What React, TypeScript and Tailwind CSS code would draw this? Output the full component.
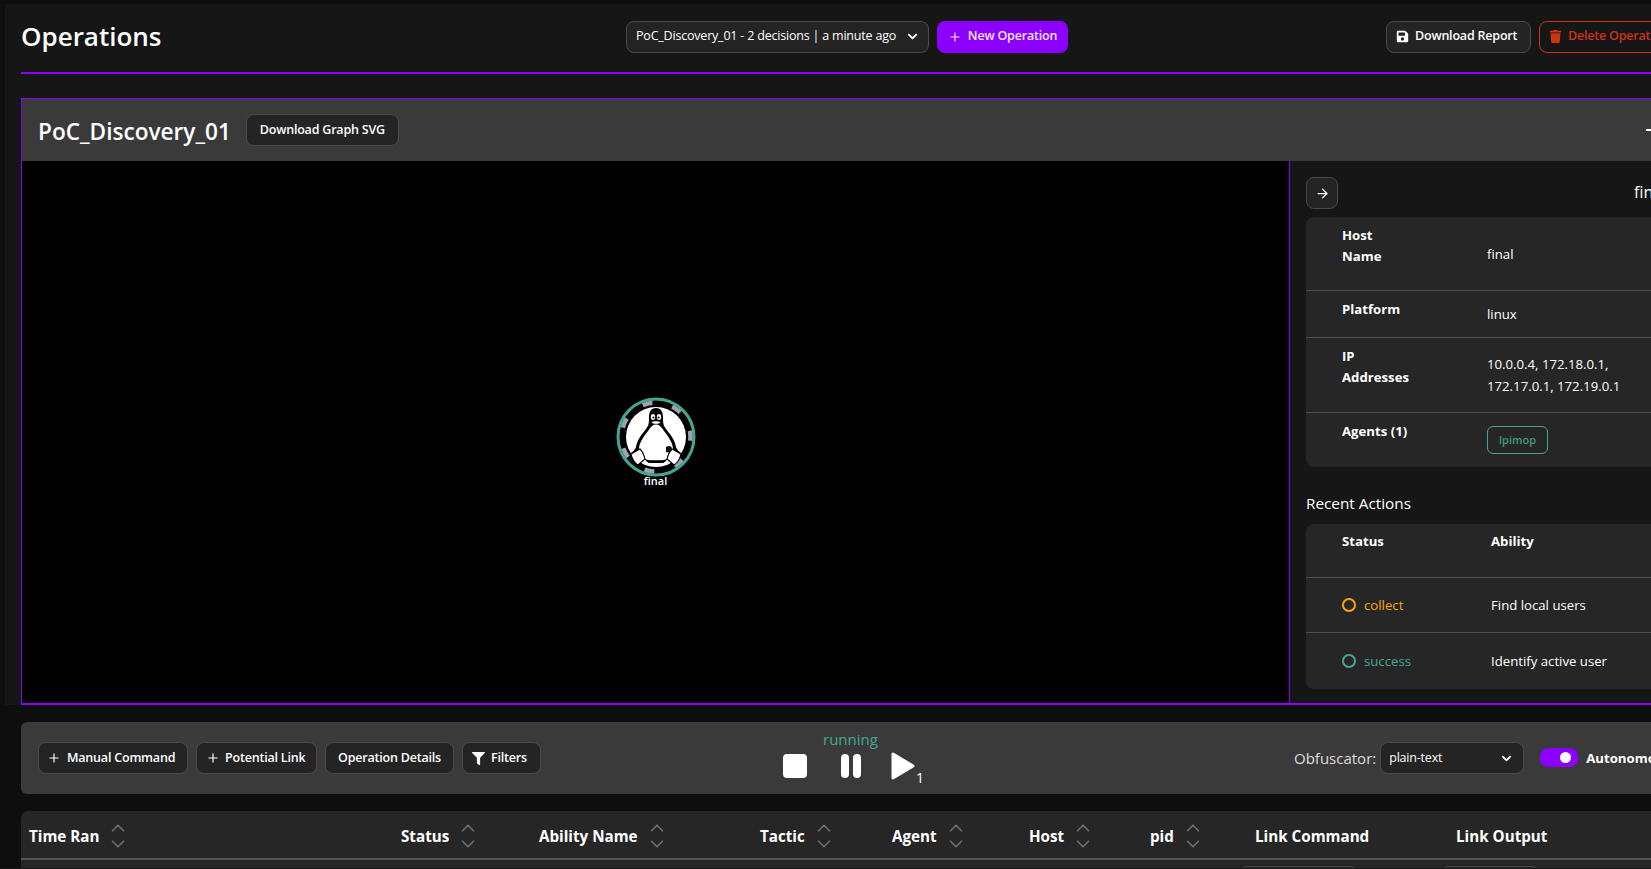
import { ArrowRight, ChevronDown, ChevronUp, Plus } from "lucide-react";
import { FaChevronDown, FaFilter, FaSave, FaTrash } from "react-icons/fa";

const rootFont = { fontFamily: '"Open Sans", "Noto Sans", sans-serif' };

const btn =
  "flex h-[32px] items-center rounded-lg border border-[#4a4a4a] bg-[#242424] text-[12.5px] tracking-[-0.2px] text-white font-semibold whitespace-nowrap";

const SortArrows = () => (
  <span className="ml-[8px] flex flex-col items-center text-[#6f6f6f]">
    <ChevronUp size={22} strokeWidth={1.8} className="-mb-[6px]" />
    <ChevronDown size={22} strokeWidth={1.8} />
  </span>
);

const PenguinNode = () => (
  <svg width="80" height="80" viewBox="0 0 80 80">
    <circle cx="40" cy="40" r="38" fill="#000" />
    <circle cx="40" cy="40" r="34.5" fill="none" stroke="#a0a0b0" strokeWidth="4.5" strokeDasharray="10 21" transform="rotate(-62 40 40)" />
    <circle cx="40" cy="40" r="38" fill="none" stroke="#44a692" strokeWidth="3" />
    <circle cx="40" cy="40" r="30" fill="#fff" />
    <path
      d="M40 11c-5 0-7 4-7 9 0 5 0 8-3 12-4 5-9 11-10 18-1 3-3 4-5 6l8 5 3-5c1 4 3 8 7 10h14c4-2 6-6 7-10l3 5 8-5c-2-2-4-3-5-6-1-7-6-13-10-18-3-4-3-7-3-12 0-5-2-9-7-9z"
      fill="#000"
    />
    <path d="M40 27c-4 1-6 4-8 7-4 5-9 12-9 18 0 6 4 12 17 12s17-6 17-12c0-6-5-13-9-18-2-3-4-6-8-7z" fill="#fff" />
    <ellipse cx="37" cy="20" rx="2.2" ry="3" fill="#fff" />
    <ellipse cx="43" cy="20" rx="2.2" ry="3" fill="#fff" />
    <circle cx="37.4" cy="20.5" r="1" fill="#000" />
    <circle cx="42.6" cy="20.5" r="1" fill="#000" />
    <path d="M35 25c2-1.5 8-1.5 10 0-2 3-8 3-10 0z" fill="#fff" stroke="#000" strokeWidth="0.6" />
    <path d="M15 57l9-5c2 2 4 6 5 10l-7 6c-3-2-6-6-7-11zM65 57l-9-5c-2 2-4 6-5 10l7 6c3-2 6-6 7-11z" fill="#fff" stroke="#000" strokeWidth="1.1" />
    <path d="M50 50c3-2 6-1 6 2s-3 4-6 3z" fill="#111" />
    <path d="M31 64h18" stroke="#000" strokeWidth="1.5" />
  </svg>
);

const HostRow = ({
  label,
  children,
  last,
  className,
}: {
  label: string[];
  children: React.ReactNode;
  last?: boolean;
  className: string;
}) => (
  <div className={`flex ${last ? "" : "border-b border-[#4d4d4d]"} ${className}`}>
    <div className="w-[181px] pl-[36px] font-bold text-white leading-[21px]">
      {label.map((l) => (
        <div key={l}>{l}</div>
      ))}
    </div>
    <div className="flex-1 text-white">{children}</div>
  </div>
);

const StatusRow = ({ color, status, ability, last }: { color: string; status: string; ability: string; last?: boolean }) => (
  <div className={`flex items-center pt-[1px] ${last ? "h-[56px]" : "h-[55px] border-b border-[#4d4d4d]"}`}>
    <div className="flex w-[185px] items-center gap-[8px] pl-[36px]">
      <span className={`h-[14px] w-[14px] rounded-full border-2 ${color === "orange" ? "border-[#ffa500]" : "border-[#44a692]"}`} />
      <span className={color === "orange" ? "text-[#ffa500]" : "text-[#44a692]"}>{status}</span>
    </div>
    <div className="text-white">{ability}</div>
  </div>
);

const Column = ({ title, width, sort = true }: { title: string; width: string; sort?: boolean }) => (
  <div className={`flex items-center ${width}`}>
    <span className="font-bold text-white text-[15.2px]">{title}</span>
    {sort && <SortArrows />}
  </div>
);

export default function App() {
  return (
    <div style={rootFont} className="h-[869px] w-[1651px] overflow-hidden bg-[#14161c] text-[13.2px]">
      <div className="flex h-[868px] overflow-hidden bg-[#0e0e0e]">
        <div className="w-[5px] shrink-0" />
        <div className="flex w-[1950px] shrink-0 flex-col">
          <div className="h-[4px] shrink-0" />
          <div className="bg-[#161616] pl-4">
            <div className="flex h-[70px] items-center border-b-2 border-[#8b00ff] pb-[3px]">
              <h1 className="w-[605px] text-[26px] font-semibold text-white">Operations</h1>
              <button className="mr-2 flex h-[32px] w-[303px] items-center justify-between whitespace-nowrap rounded-lg border border-[#4a4a4a] bg-[#242424] pl-[9px] pr-[10px] text-[12.5px] tracking-[-0.2px] text-white">
                PoC_Discovery_01 - 2 decisions | a minute ago
                <FaChevronDown size={11} />
              </button>
              <button className="flex h-[32px] w-[131px] items-center justify-center rounded-lg bg-[#8b00ff] text-[12.5px] tracking-[-0.2px] font-semibold text-white/90">
                <Plus size={14} className="mr-[6px]" />
                New Operation
              </button>
              <button className={`${btn} ml-[318px] w-[145px] pl-[9px]`}>
                <FaSave size={13} className="mr-[6px]" />
                Download Report
              </button>
              <button className="ml-2 flex h-[32px] items-center rounded-lg border border-[#cc3311] px-[9px] text-[12.5px] tracking-[-0.2px] font-semibold whitespace-nowrap text-[#cc3311]">
                <FaTrash size={13} className="mr-[6px]" />
                Delete Operation
              </button>
            </div>
            <div className="mt-[24px] flex h-[607px] flex-col border border-b-2 border-[#8b00ff] border-r-0 bg-[#161616]">
              <div className="flex h-[62px] shrink-0 items-center bg-[#3a3a3a] pl-4">
                <h2 className="mr-[15px] mt-[3px] text-[22.6px] font-semibold text-white">PoC_Discovery_01</h2>
                <button className={`${btn} w-[153px] justify-center`}>Download Graph SVG</button>
                <span className="ml-[1247px] h-[1.5px] w-[14px] bg-white" />
              </div>
              <div className="flex min-h-0 flex-1">
                <div className="flex w-[1268px] shrink-0 flex-col items-center border-r border-[#8b00ff] bg-black pt-[236px]">
                  <PenguinNode />
                  <span className="-mt-[4px] text-[11px] font-semibold text-white">final</span>
                </div>
                <div className="flex-1 px-4 pt-4">
                  <div className="relative h-[32px]">
                    <button className="flex h-[32px] w-[32px] items-center justify-center rounded-lg border border-[#4a4a4a] bg-[#242424] text-white">
                      <ArrowRight size={15} />
                    </button>
                    <span className="absolute left-[328px] top-[3px] text-[16px] text-white">final</span>
                  </div>
                  <div className="mt-[8px] w-[560px] rounded-lg bg-[#262626]">
                    <HostRow label={["Host", "Name"]} className="h-[74px] pt-[8px]">
                      <div className="pt-[20px]">final</div>
                    </HostRow>
                    <HostRow label={["Platform"]} className="h-[47px] pt-[8px]">
                      <div className="pt-[6px]">linux</div>
                    </HostRow>
                    <HostRow label={["IP", "Addresses"]} className="h-[75px] pt-[8px]">
                      <div className="pt-[7px] leading-[22px]">
                        10.0.0.4, 172.18.0.1,
                        <br />
                        172.17.0.1, 172.19.0.1
                      </div>
                    </HostRow>
                    <HostRow label={["Agents (1)"]} last className="h-[54px] pt-[8px]">
                      <span className="mt-[5px] inline-flex h-[28px] items-center rounded-md border border-[#44a692] px-[11px] text-[11px] font-semibold text-[#3d9a80]">
                        lpimop
                      </span>
                    </HostRow>
                  </div>
                  <div className="mt-[25px] text-[15.3px] text-white">Recent Actions</div>
                  <div className="mt-[9px] w-[560px] rounded-lg bg-[#262626]">
                    <div className="flex h-[54px] border-b border-[#4d4d4d] pt-[8px] font-bold text-white">
                      <div className="w-[185px] pl-[36px]">Status</div>
                      <div>Ability</div>
                    </div>
                    <StatusRow color="orange" status="collect" ability="Find local users" />
                    <StatusRow color="teal" status="success" ability="Identify active user" last />
                  </div>
                </div>
              </div>
            </div>
          </div>
          <div className="pl-4">
            <div className="mt-[17px] flex h-[72px] items-center rounded-md bg-[#3a3a3a] pl-[17px]">
              <div className="flex w-[745px] shrink-0 gap-2">
                <button className={`${btn} w-[150px] pl-[8px]`}>
                  <Plus size={14} className="mr-[6px]" />
                  Manual Command
                </button>
                <button className={`${btn} w-[121px] pl-[9px]`}>
                  <Plus size={14} className="mr-[5px]" />
                  Potential Link
                </button>
                <button className={`${btn} w-[129px] justify-center`}>Operation Details</button>
                <button className={`${btn} w-[79px] pl-[9px]`}>
                  <FaFilter size={13} className="mr-[6px]" />
                  Filters
                </button>
              </div>
              <div className="flex w-[511px] shrink-0 flex-col items-start pb-[7px]">
                <div className="mb-[3px] ml-[40px] text-[15px] leading-[20px] text-[#44a692]">running</div>
                <div className="flex items-center">
                  <span className="h-[24px] w-[24px] rounded bg-white" />
                  <span className="ml-[34px] flex gap-[4px]">
                    <span className="h-[24px] w-[8px] rounded-sm bg-white" />
                    <span className="h-[24px] w-[8px] rounded-sm bg-white" />
                  </span>
                  <span className="relative ml-[30px]">
                    <svg width="24" height="28" viewBox="0 0 24 28" className="block">
                      <path d="M2 2 L22 14 L2 26 Z" fill="#fff" stroke="#fff" strokeWidth="3" strokeLinejoin="round" />
                    </svg>
                    <span className="absolute -right-[9px] bottom-[-8px] text-[14px] text-white">1</span>
                  </span>
                </div>
              </div>
              <span className="text-[15px] text-[#dcdcdc]">Obfuscator:</span>
              <div className="ml-[4px] flex h-[32px] w-[144px] items-center justify-between rounded-lg border border-[#4a4a4a] bg-[#242424] pl-[8px] pr-[11px] text-[12.5px] tracking-[-0.2px] text-white">
                plain-text
                <FaChevronDown size={11} />
              </div>
              <span className="ml-[16px] -mt-[2px] flex h-[19px] w-[38px] items-center justify-end rounded-lg bg-[#8b00ff] pr-[7px]">
                <span className="h-[11px] w-[11px] rounded-full bg-white" />
              </span>
              <span className="ml-[8px] mt-[2px] font-bold text-white">Autonomous</span>
            </div>
            <div className="mt-[17px] h-[200px] rounded-t-lg bg-[#262626]">
              <div className="flex h-[49px] items-center border-b-2 border-[#555] pl-[8px] pt-[3px]">
                <Column title="Time Ran" width="w-[372px]" />
                <Column title="Status" width="w-[138px]" />
                <Column title="Ability Name" width="w-[221px]" />
                <Column title="Tactic" width="w-[132px]" />
                <Column title="Agent" width="w-[137px]" />
                <Column title="Host" width="w-[121px]" />
                <Column title="pid" width="w-[105px]" />
                <Column title="Link Command" width="w-[201px]" sort={false} />
                <Column title="Link Output" width="w-[200px]" sort={false} />
              </div>
              <div className="flex pl-[1219px] pt-[6px]">
                <div className="h-[32px] w-[118px] rounded-lg border border-[#4a4a4a]" />
                <div className="ml-[83px] h-[32px] w-[98px] rounded-lg border border-[#4a4a4a]" />
              </div>
            </div>
          </div>
        </div>
      </div>
    </div>
  );
}
